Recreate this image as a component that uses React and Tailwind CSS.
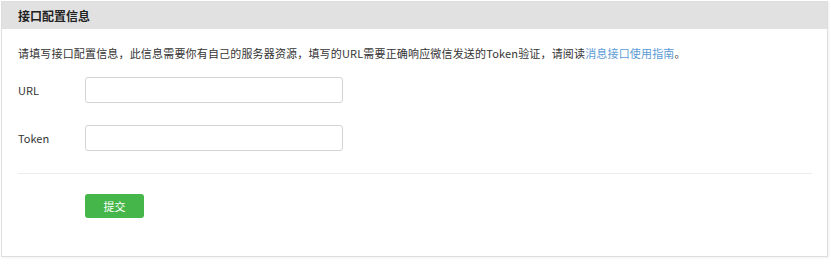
export default function App() {
  const font = { fontFamily: '"Microsoft YaHei", "Noto Sans CJK SC", "Open Sans", sans-serif' };
  return (
    <div className="w-[831px] h-[264px] bg-white pt-[1px] pl-[1px]" style={font}>
      <div className="w-[827px] h-[256px] border border-[#dedede] shadow-[1px_1px_2px_rgba(0,0,0,0.06)] bg-white flex flex-col">
        <div className="h-[27px] bg-[#e1e1e1] flex items-center pl-[16px] text-[12px] font-bold text-[#222]">
          接口配置信息
        </div>
        <div className="px-[16px] pt-[14px] flex flex-col">
          <p className="text-[11px] leading-[20px] text-[#333] tracking-[0.17px]">
            请填写接口配置信息，此信息需要你有自己的服务器资源，填写的URL需要正确响应微信发送的Token验证，请阅读
            <span className="text-[#5b9bd5]">消息接口使用指南</span>。
          </p>
          <div className="flex items-center mt-[14px] h-[26px]">
            <label className="w-[67px] text-[11px] text-[#333]">URL</label>
            <input className="w-[258px] h-[26px] border border-[#d4d4d4] rounded-[3px] outline-none" />
          </div>
          <div className="flex items-center mt-[22px] h-[26px]">
            <label className="w-[67px] text-[11px] text-[#333]">Token</label>
            <input className="w-[258px] h-[26px] border border-[#d4d4d4] rounded-[3px] outline-none" />
          </div>
          <div className="mt-[22px] mr-[-1px] border-t border-[#ececec]" />
          <div className="pl-[67px] mt-[20px]">
            <button className="w-[59px] h-[24px] bg-[#45b649] rounded-[3px] text-white text-[11px] flex items-center justify-center">
              提交
            </button>
          </div>
        </div>
      </div>
    </div>
  );
}
